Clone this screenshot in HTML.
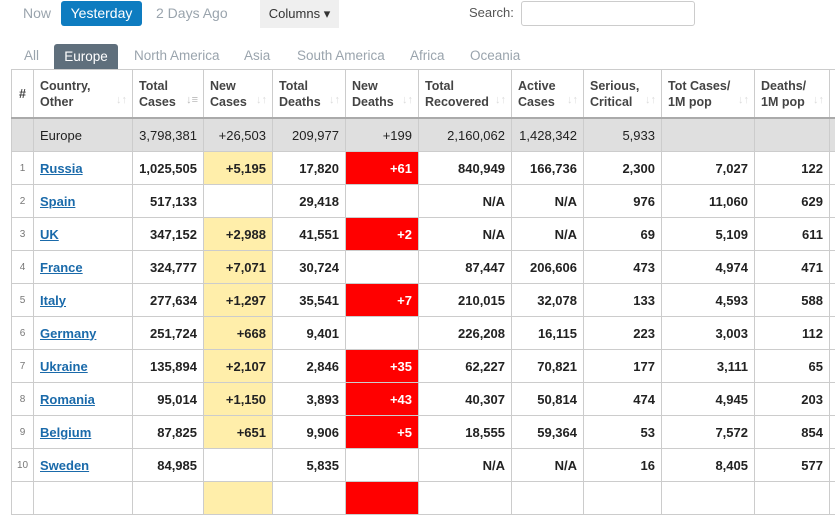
<!DOCTYPE html>
<html><head><style>
body{margin:0;width:835px;height:487px;overflow:hidden;background:#fff;font-family:"Liberation Sans",Arial,sans-serif;font-size:13px;color:#333;position:relative}
.a{position:absolute}
.btn{position:absolute;top:1px;height:25px;line-height:25px;font-size:14px;color:#9aa4ad}
table{position:absolute;left:11px;top:69px;border-collapse:collapse;table-layout:fixed;width:838px}
td,th{border:1px solid #ccc;padding:0 6px;height:32px;text-align:right;white-space:nowrap;overflow:hidden}
th{height:47px;text-align:left;font-size:12.5px;color:#444;border-bottom:2px solid #aaa;position:relative;line-height:16px;vertical-align:middle;padding-right:6px}
th i{position:absolute;right:5px;bottom:9px;color:#ddd;font-style:normal;font-size:11px;font-weight:bold}
tr.t td{background:#dfdfdf;font-weight:normal}
tbody tr td{font-weight:bold;color:#222}
td:first-child{font-size:10px;color:#777;font-weight:normal;text-align:center;padding:0}
td:nth-child(2){text-align:left}
td a{color:#1a6aaa;text-decoration:underline}
.y{background:#ffeeaa}.r{background:#f00;color:#fff!important}
</style></head><body>
<div class="btn" style="left:23px">Now</div>
<div class="a" style="left:61px;top:1px;width:81px;height:25px;background:#0e7cc0;border-radius:3px;color:#fff;font-size:14px;line-height:25px;text-align:center">Yesterday</div>
<div class="btn" style="left:156px">2 Days Ago</div>
<div class="a" style="left:260px;top:0;width:79px;height:28px;background:#efefef;font-size:13px;line-height:28px;text-align:center;color:#333">Columns ▾</div>
<div class="a" style="left:469px;top:5px;color:#555;font-size:13px">Search:</div>
<div class="a" style="left:521px;top:1px;width:172px;height:23px;border:1px solid #ccc;border-radius:3px"></div>
<div class="a" style="top:48px;left:24px;font-size:13.5px;color:#9aa4ad">All</div>
<div class="a" style="left:54px;top:44px;width:64px;height:25px;background:#5f6f7c;color:#fff;border-radius:3px 3px 0 0;font-size:13.5px;line-height:25px;text-align:center">Europe</div>
<div class="a" style="top:48px;left:134px;font-size:13.5px;color:#9aa4ad">North America</div>
<div class="a" style="top:48px;left:244px;font-size:13.5px;color:#9aa4ad">Asia</div>
<div class="a" style="top:48px;left:297px;font-size:13.5px;color:#9aa4ad">South America</div>
<div class="a" style="top:48px;left:410px;font-size:13.5px;color:#9aa4ad">Africa</div>
<div class="a" style="top:48px;left:470px;font-size:13.5px;color:#9aa4ad">Oceania</div>
<table>
<colgroup><col style="width:22px"><col style="width:99px"><col style="width:71px"><col style="width:69px"><col style="width:73px"><col style="width:73px"><col style="width:93px"><col style="width:72px"><col style="width:78px"><col style="width:93px"><col style="width:75px"><col style="width:20px"></colgroup>
<thead><tr><th style="padding:0;text-align:center">#</th><th>Country,<br>Other<i>↓↑</i></th><th>Total<br>Cases<i style="color:#bbb">↓≡</i></th><th>New<br>Cases<i>↓↑</i></th><th>Total<br>Deaths<i>↓↑</i></th><th>New<br>Deaths<i>↓↑</i></th><th>Total<br>Recovered<i>↓↑</i></th><th>Active<br>Cases<i>↓↑</i></th><th>Serious,<br>Critical<i>↓↑</i></th><th>Tot Cases/<br>1M pop<i>↓↑</i></th><th>Deaths/<br>1M pop<i>↓↑</i></th><th></th></tr></thead>
<tbody>
<tr class="t"><td></td><td>Europe</td><td>3,798,381</td><td>+26,503</td><td>209,977</td><td>+199</td><td>2,160,062</td><td>1,428,342</td><td>5,933</td><td></td><td></td><td></td></tr>
<tr><td>1</td><td><a>Russia</a></td><td>1,025,505</td><td class="y">+5,195</td><td>17,820</td><td class="r">+61</td><td>840,949</td><td>166,736</td><td>2,300</td><td>7,027</td><td>122</td><td></td></tr>
<tr><td>2</td><td><a>Spain</a></td><td>517,133</td><td></td><td>29,418</td><td></td><td>N/A</td><td>N/A</td><td>976</td><td>11,060</td><td>629</td><td></td></tr>
<tr><td>3</td><td><a>UK</a></td><td>347,152</td><td class="y">+2,988</td><td>41,551</td><td class="r">+2</td><td>N/A</td><td>N/A</td><td>69</td><td>5,109</td><td>611</td><td></td></tr>
<tr><td>4</td><td><a>France</a></td><td>324,777</td><td class="y">+7,071</td><td>30,724</td><td></td><td>87,447</td><td>206,606</td><td>473</td><td>4,974</td><td>471</td><td></td></tr>
<tr><td>5</td><td><a>Italy</a></td><td>277,634</td><td class="y">+1,297</td><td>35,541</td><td class="r">+7</td><td>210,015</td><td>32,078</td><td>133</td><td>4,593</td><td>588</td><td></td></tr>
<tr><td>6</td><td><a>Germany</a></td><td>251,724</td><td class="y">+668</td><td>9,401</td><td></td><td>226,208</td><td>16,115</td><td>223</td><td>3,003</td><td>112</td><td></td></tr>
<tr><td>7</td><td><a>Ukraine</a></td><td>135,894</td><td class="y">+2,107</td><td>2,846</td><td class="r">+35</td><td>62,227</td><td>70,821</td><td>177</td><td>3,111</td><td>65</td><td></td></tr>
<tr><td>8</td><td><a>Romania</a></td><td>95,014</td><td class="y">+1,150</td><td>3,893</td><td class="r">+43</td><td>40,307</td><td>50,814</td><td>474</td><td>4,945</td><td>203</td><td></td></tr>
<tr><td>9</td><td><a>Belgium</a></td><td>87,825</td><td class="y">+651</td><td>9,906</td><td class="r">+5</td><td>18,555</td><td>59,364</td><td>53</td><td>7,572</td><td>854</td><td></td></tr>
<tr><td>10</td><td><a>Sweden</a></td><td>84,985</td><td></td><td>5,835</td><td></td><td>N/A</td><td>N/A</td><td>16</td><td>8,405</td><td>577</td><td></td></tr>
<tr><td></td><td></td><td></td><td class="y"></td><td></td><td class="r"></td><td></td><td></td><td></td><td></td><td></td><td></td></tr>
</tbody></table>
</body></html>
